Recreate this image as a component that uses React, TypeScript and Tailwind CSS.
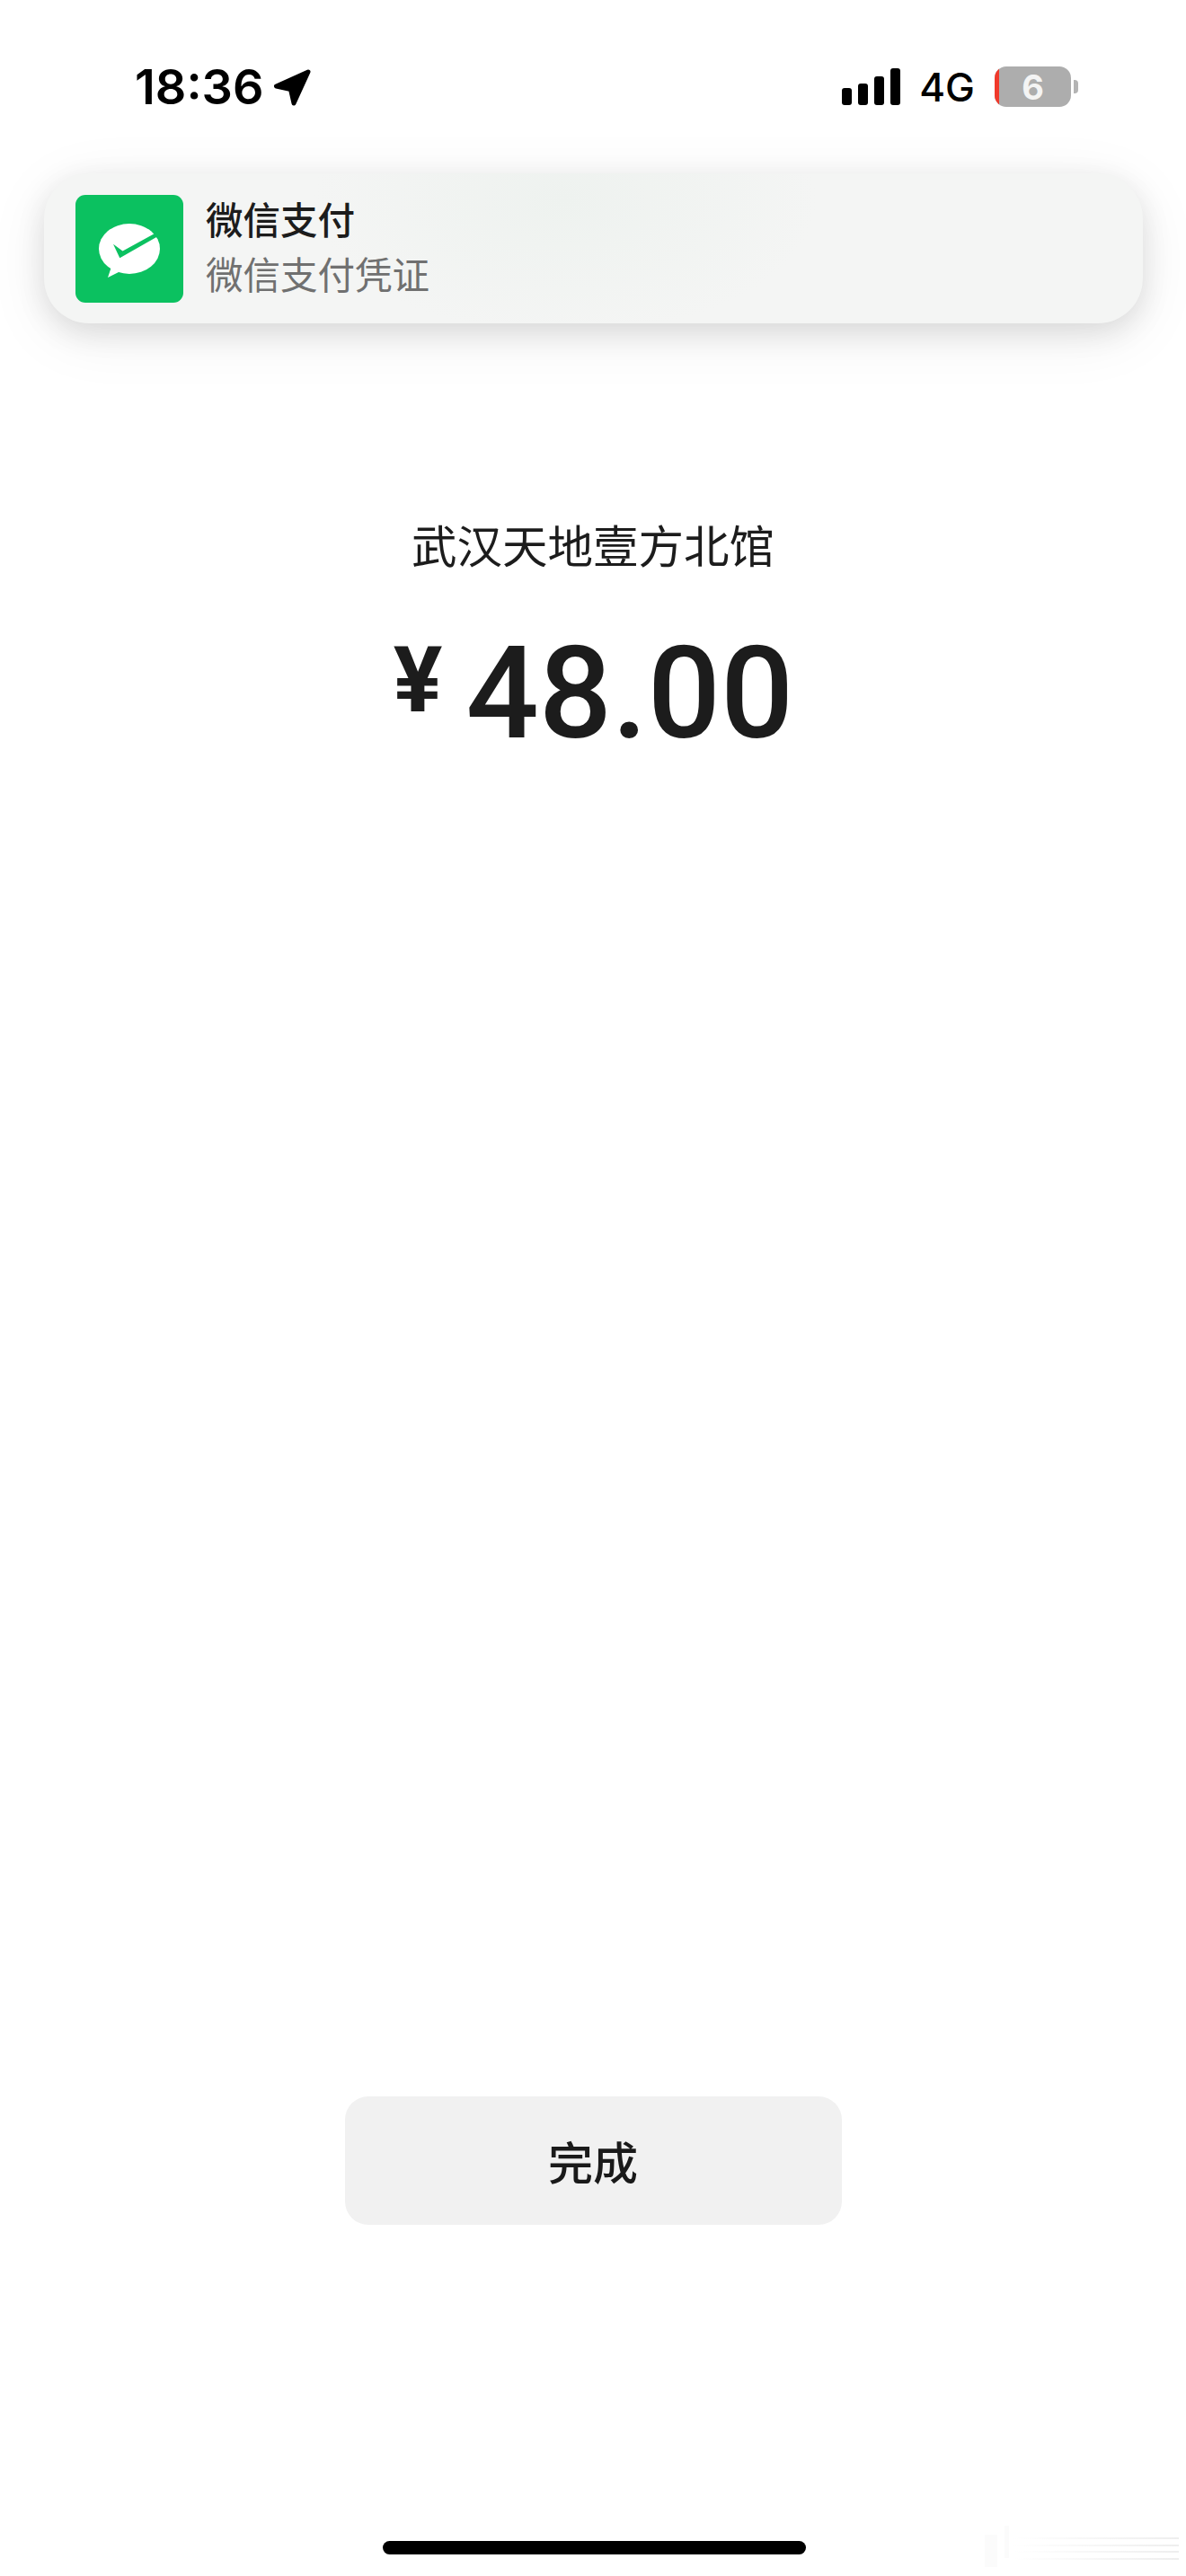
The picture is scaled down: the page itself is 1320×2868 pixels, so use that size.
function LocationArrow() {
  return (
    <svg viewBox="0 0 42 42" className="ml-[10px] h-[42px] w-[42px]">
      <path
        d="M39 4 L3.500 20 L19.500 23.500 L23 39 Z"
        fill="#000"
        stroke="#000"
        strokeWidth="5"
        strokeLinejoin="round"
      />
    </svg>
  )
}

function SignalBars() {
  const bars = ['h-[19px]', 'h-[24px]', 'h-[32px]', 'h-[41px]']
  return (
    <div className="flex items-end gap-[7px]">
      {bars.map((h) => (
        <div key={h} className={`w-[11px] rounded-[3px] bg-black ${h}`} />
      ))}
    </div>
  )
}

function Battery() {
  return (
    <div className="flex items-center gap-[3px]">
      <div className="relative flex h-[45px] w-[85px] items-center justify-center overflow-hidden rounded-[13px] bg-[#adadad]">
        <div className="absolute inset-y-0 left-0 w-[5px] bg-[#f0392b]" />
        <span className="font-['Inter',sans-serif] text-[38px] leading-none font-bold text-[#f4f4f4]">6</span>
      </div>
      <div className="h-[15px] w-[5px] rounded-r-[4px] bg-[#b4b4b4]" />
    </div>
  )
}

function WeChatPayIcon() {
  return (
    <div className="flex h-[120px] w-[120px] shrink-0 items-center justify-center rounded-[11px] bg-[#0bc160]">
      <svg viewBox="0 0 68 60" className="mt-[4px] h-[60px] w-[68px]">
        <ellipse cx="34" cy="28" rx="34" ry="28" fill="#fff" />
        <path d="M14 48 L10 60 L24 53 Z" fill="#fff" />
        <path d="M16 22.700 L26.500 30.500 L63 10.500 L65 14.500 L23.300 38.300 Z" fill="#0bc160" />
      </svg>
    </div>
  )
}

// faint leftover watermark in the bottom right corner
function Watermark() {
  const lines = ['top-[13px]', 'top-[21px]', 'top-[28px]', 'top-[36px]']
  return (
    <div className="absolute right-[8px] bottom-[10px] h-[46px] w-[216px]">
      <div className="absolute top-[10px] left-0 h-[36px] w-[14px] bg-[#fbfbfb]" />
      <div className="absolute top-0 left-[22px] h-[36px] w-[5px] bg-[#fbfbfb]" />
      {lines.map((t) => (
        <div key={t} className={`absolute right-0 left-[32px] h-[2px] bg-gradient-to-r from-white to-[#eeeeee] ${t}`} />
      ))}
    </div>
  )
}

export default function App() {
  return (
    <div className="relative flex h-[2868px] w-[1320px] flex-col overflow-hidden bg-white font-['Noto_Sans_CJK_SC',sans-serif] text-[#1a1a1a]">
      {/* status bar */}
      <div className="flex h-[193px] items-start justify-between pt-[74px] pr-[120px] pl-[150px]">
        <div className="flex h-[45px] items-center">
          <span className="font-['Inter',sans-serif] text-[54px] leading-none font-semibold text-black">18:36</span>
          <LocationArrow />
        </div>
        <div className="flex h-[45px] items-center">
          <SignalBars />
          <span className="mr-[22px] ml-[21px] font-['Inter',sans-serif] text-[44px] leading-none font-medium text-black">4G</span>
          <Battery />
        </div>
      </div>

      {/* notification */}
      <div className="mr-[48px] ml-[49px] flex h-[167px] items-center gap-[25px] rounded-[50px] bg-[#f4f5f4] bg-[radial-gradient(ellipse_280px_150px_at_580px_30px,#eef2ef,#f4f5f4)] pl-[35px] shadow-[0_10px_32px_rgba(0,0,0,0.11),0_14px_70px_rgba(0,0,0,0.07)]">
        <WeChatPayIcon />
        <div className="-mt-[8px] flex flex-col">
          <span className="text-[41.5px] leading-[62px] font-medium text-[#1c1c1c]">微信支付</span>
          <span className="text-[41.5px] leading-[60px] text-[#707070]">微信支付凭证</span>
        </div>
      </div>

      {/* merchant + amount */}
      <div className="mt-[210px] flex flex-col items-center">
        <span className="text-[50.5px] leading-[70px] text-[#1c1c1c]">武汉天地壹方北馆</span>
        <div className="mt-[67px] ml-[1px] flex h-[130px] items-center gap-[26px]">
          <span className="mb-[30px] font-['Roboto',sans-serif] text-[102px] leading-none font-bold text-[#1c1c1c]">¥</span>
          <span className="font-['Roboto',sans-serif] text-[143px] leading-none font-medium text-[#1c1c1c]">48.00</span>
        </div>
      </div>

      {/* done button */}
      <div className="mt-auto flex justify-center">
        <button className="h-[143px] w-[553px] rounded-[26px] bg-[#f1f1f1] text-[50px] font-medium text-[#1a1a1a]">完成</button>
      </div>

      {/* home indicator */}
      <div className="mt-[352px] mb-[24px] ml-[3px] flex justify-center">
        <div className="h-[15px] w-[471px] rounded-full bg-black" />
      </div>

      <Watermark />
    </div>
  )
}
